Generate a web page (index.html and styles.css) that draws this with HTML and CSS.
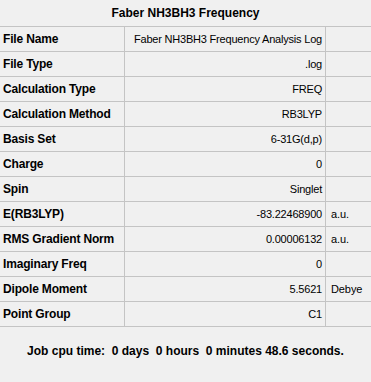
FILE: index.html
```html
<!DOCTYPE html>
<html>
<head>
<meta charset="utf-8">
<link rel="stylesheet" href="styles.css">
</head>
<body>
<div class="panel">
  <div class="title">Faber NH3BH3 Frequency</div>
  <div class="table">
    <div class="row"><div class="label">File Name</div><div class="value">Faber NH3BH3 Frequency Analysis Log</div><div class="unit"></div></div>
    <div class="row"><div class="label">File Type</div><div class="value">.log</div><div class="unit"></div></div>
    <div class="row"><div class="label">Calculation Type</div><div class="value">FREQ</div><div class="unit"></div></div>
    <div class="row"><div class="label">Calculation Method</div><div class="value">RB3LYP</div><div class="unit"></div></div>
    <div class="row"><div class="label">Basis Set</div><div class="value">6-31G(d,p)</div><div class="unit"></div></div>
    <div class="row"><div class="label">Charge</div><div class="value">0</div><div class="unit"></div></div>
    <div class="row"><div class="label">Spin</div><div class="value">Singlet</div><div class="unit"></div></div>
    <div class="row"><div class="label">E(RB3LYP)</div><div class="value">-83.22468900</div><div class="unit">a.u.</div></div>
    <div class="row"><div class="label">RMS Gradient Norm</div><div class="value">0.00006132</div><div class="unit">a.u.</div></div>
    <div class="row"><div class="label">Imaginary Freq</div><div class="value">0</div><div class="unit"></div></div>
    <div class="row"><div class="label">Dipole Moment</div><div class="value">5.5621</div><div class="unit">Debye</div></div>
    <div class="row last"><div class="label">Point Group</div><div class="value">C1</div><div class="unit"></div></div>
  </div>
  <div class="footer">Job cpu time:&nbsp; 0 days&nbsp; 0 hours&nbsp; 0 minutes 48.6 seconds.</div>
</div>
</body>
</html>
```

FILE: styles.css
```css
html, body {
  margin: 0;
  padding: 0;
  background: #f0f0f0;
}
body {
  font-family: "Liberation Sans", Arial, sans-serif;
  font-size: 11px;
  color: #000;
  width: 371px;
  height: 382px;
  overflow: hidden;
}
.title {
  height: 26px;
  line-height: 26px;
  text-align: center;
  font-weight: bold;
  font-size: 12px;
}
.table {
  display: flex;
  flex-direction: column;
}
.row {
  display: flex;
  height: 25px;
  box-sizing: border-box;
  border-top: 1px solid #c4c4c4;
}
.row.last {
  height: 26px;
  border-bottom: 1px solid #c4c4c4;
}
.label {
  width: 125px;
  box-sizing: border-box;
  border-right: 1px solid #c4c4c4;
  padding-left: 3px;
  font-weight: bold;
  font-size: 12px;
  letter-spacing: -0.17px;
  line-height: 24px;
  white-space: nowrap;
}
.value {
  width: 201px;
  box-sizing: border-box;
  border-right: 1px solid #c4c4c4;
  padding-right: 3px;
  text-align: right;
  letter-spacing: -0.2px;
  line-height: 24px;
  white-space: nowrap;
}
.unit {
  flex: 1;
  padding-left: 5px;
  letter-spacing: -0.1px;
  line-height: 24px;
  white-space: nowrap;
}
.footer {
  text-align: center;
  font-weight: bold;
  font-size: 12px;
  padding-top: 17px;
  line-height: 14px;
}
```
